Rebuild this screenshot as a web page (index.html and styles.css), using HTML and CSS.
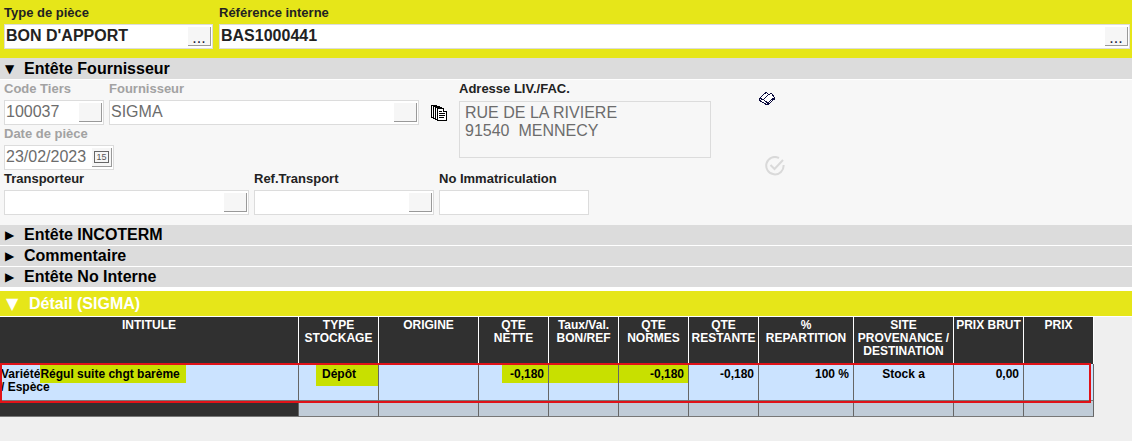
FILE: index.html
```html
<!DOCTYPE html>
<html lang="fr">
<head>
  <meta charset="utf-8">
  <meta name="viewport" content="width=device-width, initial-scale=1.0">
  <title>BON D'APPORT</title>
  <link rel="stylesheet" href="styles.css">
</head>
<body>

  <form>
    <div class="top-bar">
      <div class="field w-type">
        <label for="type">Type de pièce</label>
        <div class="box strong">
          <input type="text" id="type" value="BON D'APPORT">
          <button type="button">...</button>
        </div>
      </div>
      <div class="field grow">
        <label for="reference">Référence interne</label>
        <div class="box strong">
          <input type="text" id="reference" value="BAS1000441">
          <button type="button">...</button>
        </div>
      </div>
    </div>

    <button type="button" class="section-title open"><span class="arrow">▼</span>Entête Fournisseur</button>
    <div class="section-body">
      <div class="supplier">
        <div class="supplier-fields">
          <div class="row">
            <div class="field w-code disabled">
              <label for="code">Code Tiers</label>
              <div class="box">
                <input type="text" id="code" value="100037" readonly>
                <button type="button" aria-label="Choisir le tiers"></button>
              </div>
            </div>
            <div class="field w-supplier disabled">
              <label for="supplier">Fournisseur</label>
              <div class="box">
                <input type="text" id="supplier" value="SIGMA" readonly>
                <button type="button" aria-label="Choisir le fournisseur"></button>
              </div>
            </div>
            <button type="button" class="icon-button" aria-label="Copier">
              <svg width="16" height="16" viewBox="0 0 16 16" fill="#fff" stroke="#000" shape-rendering="crispEdges">
                <path d="M0.500 0.500H5.500V12.500H0.500z"/>
                <path d="M2.500 1.500H8.500V13.500H2.500z"/>
                <path d="M4.500 2.500H10.500V14.500H4.500z"/>
                <path d="M6.500 3.500H12.500L15.500 6.500V15.500H6.500z"/>
                <path d="M12.500 3.500V6.500H15.500M8 6.500H11M8 8.500H14M8 10.500H14M8 12.500H13"/>
              </svg>
            </button>
          </div>
          <div class="row">
            <div class="field w-date disabled">
              <label for="date">Date de pièce</label>
              <div class="box">
                <input type="text" id="date" value="23/02/2023" readonly>
                <button type="button" class="date-button" aria-label="Calendrier"><span>15</span></button>
              </div>
            </div>
          </div>
        </div>
        <div class="field w-address">
          <label for="address">Adresse LIV./FAC.</label>
          <textarea id="address" readonly>RUE DE LA RIVIERE
91540  MENNECY</textarea>
        </div>
        <div class="side-icons">
          <button type="button" class="icon-button" aria-label="Carnet">
            <svg width="16" height="14" viewBox="0 0 16 14" fill="none" stroke="#0a0a3c" shape-rendering="crispEdges">
              <path d="M0.500 6.500L5.500 1.500L7.500 0.500L9.500 2.500L12.500 1.500L15.500 5.500L15.500 7L9 12.500L7.500 12.500L0.500 8.500z" fill="#fff"/>
              <path d="M9.500 2.500L4.500 7.500M0.500 6.500L4.500 7.500L8.500 11L15.500 5.500"/>
            </svg>
          </button>
          <button type="button" class="icon-button check" aria-label="Valider">
            <svg width="20" height="20" viewBox="0 0 20 20" fill="none" stroke="#d9d9d9" stroke-width="2">
              <path d="M14 2A8.700 8.700 0 1 0 18.600 9"/>
              <path d="M5.500 9L9.500 13L18 4"/>
            </svg>
          </button>
        </div>
      </div>
      <div class="row">
        <div class="field w-carrier">
          <label for="carrier">Transporteur</label>
          <div class="box">
            <input type="text" id="carrier">
            <button type="button" aria-label="Choisir le transporteur"></button>
          </div>
        </div>
        <div class="field w-transport">
          <label for="transport">Ref.Transport</label>
          <div class="box">
            <input type="text" id="transport">
            <button type="button" aria-label="Choisir le transport"></button>
          </div>
        </div>
        <div class="field w-plate">
          <label for="plate">No Immatriculation</label>
          <div class="box">
            <input type="text" id="plate">
          </div>
        </div>
      </div>
    </div>

    <button type="button" class="section-title"><span class="arrow">▶</span>Entête INCOTERM</button>
    <button type="button" class="section-title"><span class="arrow">▶</span>Commentaire</button>
    <button type="button" class="section-title"><span class="arrow">▶</span>Entête No Interne</button>
    <button type="button" class="detail-title"><span class="arrow">▼</span>Détail (SIGMA)</button>
  </form>

  <div class="detail">
    <table>
      <colgroup>
        <col>
        <col class="c80">
        <col class="c100">
        <col class="c70">
        <col class="c70">
        <col class="c70">
        <col class="c70">
        <col class="c95">
        <col class="c100">
        <col class="c70">
        <col class="c70">
      </colgroup>
      <thead>
        <tr>
          <th>INTITULE</th>
          <th>TYPE<br>STOCKAGE</th>
          <th>ORIGINE</th>
          <th>QTE<br>NETTE</th>
          <th>Taux/Val.<br>BON/REF</th>
          <th>QTE<br>NORMES</th>
          <th>QTE<br>RESTANTE</th>
          <th>%<br>REPARTITION</th>
          <th>SITE<br>PROVENANCE /<br>DESTINATION</th>
          <th>PRIX BRUT</th>
          <th>PRIX</th>
        </tr>
      </thead>
      <tbody>
        <tr class="selected">
          <td class="title">Variété<mark>Régul suite chgt barème</mark><br>/ Espèce</td>
          <td><mark class="stock">Dépôt</mark></td>
          <td></td>
          <td class="num"><mark class="net">-0,180</mark></td>
          <td><mark class="full">&nbsp;</mark></td>
          <td class="num"><mark class="full">-0,180</mark></td>
          <td class="num">-0,180</td>
          <td class="num">100 %</td>
          <td class="site">Stock a</td>
          <td class="num">0,00</td>
          <td></td>
        </tr>
        <tr class="empty">
          <td></td><td></td><td></td><td></td><td></td><td></td><td></td><td></td><td></td><td></td><td></td>
        </tr>
      </tbody>
    </table>
  </div>

</body>
</html>
```
FILE: styles.css
```css
* {
  box-sizing: border-box;
}
body {
  margin: 0;
  background-color: #efefef;
  font-family: "Liberation Sans", Arial, sans-serif;
  color: #222;
}
button, input, textarea {
  margin: 0;
  padding: 0;
  border: none;
  font-family: inherit;
}

/* Fields */
.top-bar {
  display: flex;
  gap: 6px;
  padding: 4px 2px 9px 4px;
  background-color: #e6e619;
}
.row {
  display: flex;
  gap: 5px;
}
.field {
  display: flex;
  flex-direction: column;
}
.field label {
  font-size: 13px;
  font-weight: bold;
  line-height: 17px;
  height: 20px;
  white-space: nowrap;
}
.box {
  display: flex;
  height: 25px;
  padding: 2px 1px;
  border: 1px solid #dcdcdc;
  background-color: #fff;
}
.box input {
  flex: 1;
  min-width: 0;
  padding-bottom: 2px;
  background: none;
  color: #222;
  font-size: 16px;
}
.strong input {
  font-weight: bold;
}
.box button {
  width: 23px;
  border-right: 1px solid #999;
  border-bottom: 1px solid #999;
  background-color: #f6f6f6;
  color: #1c1c3c;
  font-size: 16px;
}
.strong button {
  padding-top: 3px;
  line-height: 16px;
}
.disabled label {
  color: #a2a2a2;
}
.disabled input {
  color: #6c6c6c;
}
.box .date-button {
  display: flex;
  width: 20px;
  align-items: center;
  justify-content: center;
}
.date-button span {
  padding: 0 1px;
  border: 1px solid #666;
  color: #555;
  font-size: 9px;
  line-height: 10px;
}
.grow {
  flex: 1;
}
.w-type { width: 209px; }
.w-code { width: 100px; }
.w-supplier { width: 310px; }
.w-date { width: 110px; }
.w-address { width: 252px; }
.w-carrier { width: 245px; }
.w-transport { width: 180px; }
.w-plate { width: 150px; }

/* Sections */
.section-title {
  display: flex;
  align-items: center;
  width: 100%;
  height: 21px;
  border-bottom: 1px solid #fff;
  background-color: #dcdcdc;
  color: #000;
  font-size: 16px;
  font-weight: bold;
  text-align: left;
}
.section-title.open {
  height: 22px;
}
.arrow {
  width: 19px;
  margin-left: 5px;
  font-family: "DejaVu Sans", sans-serif;
  font-size: 12px;
  font-weight: normal;
  text-align: left;
}
.section-body {
  padding: 0 4px 10px;
  background-color: #f7f7f7;
}
.supplier {
  display: flex;
  height: 90px;
}
.supplier-fields {
  width: 455px;
}
.w-address textarea {
  height: 57px;
  margin-top: 1px;
  padding: 2px 5px;
  border: 1px solid #dcdcdc;
  background: none;
  color: #6c6c6c;
  font-size: 16px;
  line-height: 18px;
  resize: none;
}
.icon-button {
  display: block;
  background: none;
}
.icon-button svg {
  display: block;
}
.row .icon-button {
  align-self: flex-end;
  margin: 0 0 4px 7px;
}
.side-icons {
  display: flex;
  flex-direction: column;
  align-items: flex-start;
  gap: 50px;
  padding: 12px 0 0 48px;
}
.side-icons .check {
  margin-left: 6px;
}
.detail-title {
  display: flex;
  align-items: center;
  width: 100%;
  height: 29px;
  border-top: 3px solid #fff;
  border-bottom: 1px solid #fff;
  background-color: #e6e619;
  color: #fff;
  font-size: 16px;
  font-weight: bold;
}
.detail-title .arrow {
  width: 23px;
  margin-left: 6px;
  font-size: 16px;
}

/* Detail table */
.detail {
  padding-right: 38px;
}
table {
  width: 100%;
  table-layout: fixed;
  border-collapse: separate;
  border-spacing: 0;
  color: #000;
  font-size: 12px;
  font-weight: bold;
  line-height: 13px;
}
.c70 { width: 70px; }
.c80 { width: 80px; }
.c95 { width: 95px; }
.c100 { width: 100px; }
th, td {
  padding: 0;
  vertical-align: top;
}
th {
  height: 47px;
  padding-top: 2px;
  border-right: 1px solid #fff;
  background-color: #303030;
  color: #fff;
  white-space: nowrap;
}
td {
  border-right: 1px solid #666;
  border-bottom: 1px solid #777;
  background-color: #cbe3ff;
}
.selected {
  position: relative;
}
.selected td {
  height: 37px;
  padding-top: 4px;
}
/* red frame over the whole selected line */
.title::after {
  content: "";
  position: absolute;
  inset: -1px 3px -2px 0;
  border: 2px solid #e01218;
}
.selected .title {
  padding-left: 1px;
}
mark {
  padding: 3px 0 2px;
  background-color: #c8e000;
  color: #000;
}
.title mark {
  padding-right: 6px;
}
.stock, .net, .full {
  display: block;
  margin-top: -3px;
}
.stock {
  margin-left: 17px;
  padding-left: 6px;
  padding-bottom: 5px;
}
.net {
  margin-left: 23px;
}
.num {
  text-align: right;
}
.num:not(:has(mark)), .num mark {
  padding-right: 4px;
}
.site {
  text-align: center;
}
.empty td {
  height: 16px;
  background-color: #c0ccd8;
}
.empty td:first-child {
  background-color: #303030;
}
```
